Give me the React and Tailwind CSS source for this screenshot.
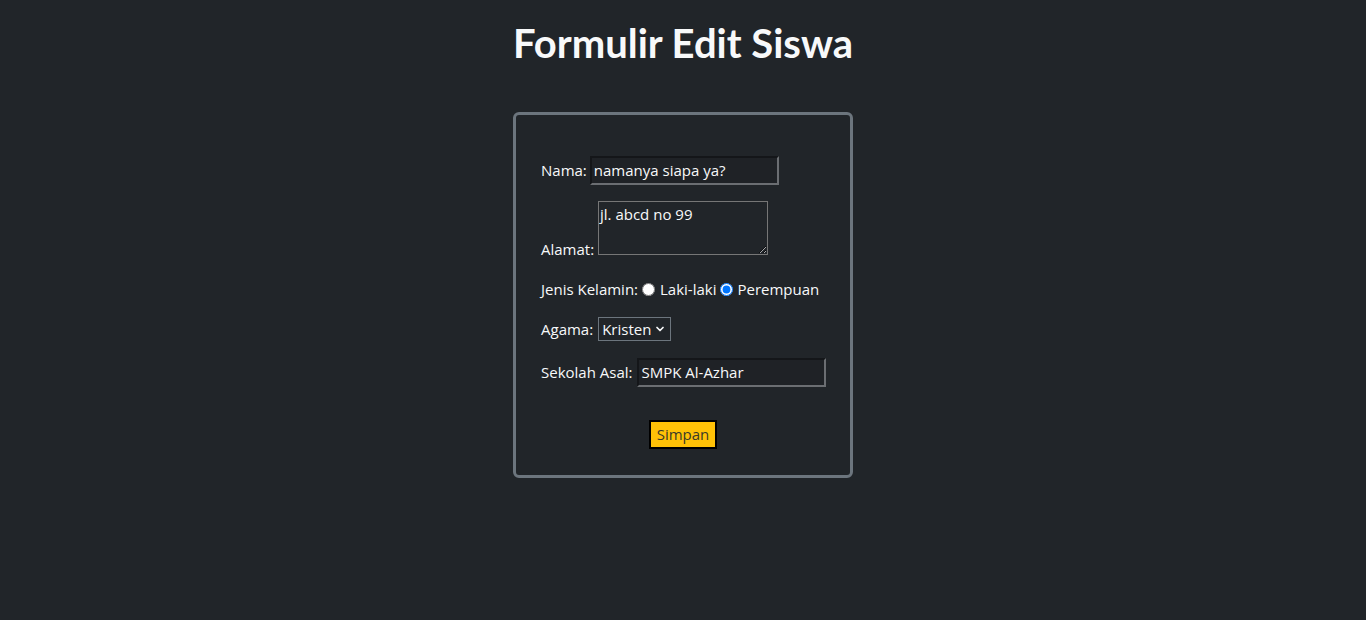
import React from 'react'
import { ChevronDown } from 'lucide-react'

const App = () => {
  return (
    <div className="min-h-screen bg-[#212529] text-[#f8f9fa] font-['Open_Sans','Noto_Sans',sans-serif] text-[15px]">
      <h1 className="pt-[19px] text-center font-['Lato','Open_Sans',sans-serif] text-[40px] font-bold leading-[48px]">
        Formulir Edit Siswa
      </h1>

      <form className="mx-auto mt-[45px] w-[340px] rounded-[6px] border-[3px] border-[#6c757d] pl-[25px] pr-[10px] pt-[40px] pb-[26px]">
        <div className="flex h-[30px] items-center gap-[3px] whitespace-nowrap">
          <label className="shrink-0">Nama:</label>
          <input
            type="text"
            defaultValue="namanya siapa ya?"
            className="h-[29px] w-[189px] shrink-0 border-2 border-t-[#141619] border-l-[#141619] border-b-[#6b6e72] border-r-[#6b6e72] bg-[#1f2226] px-[2px] text-[#f8f9fa] outline-none"
          />
        </div>

        <div className="mt-[16px] whitespace-nowrap leading-[24px]">
          <label>Alamat: </label>
          <textarea
            defaultValue="jl. abcd no 99"
            className="h-[54px] w-[170px] border border-[#767676] bg-transparent px-[1px] py-0 align-baseline text-[#f8f9fa] outline-none"
          />
        </div>

        <div className="mt-[16px] flex h-[24px] items-center whitespace-nowrap">
          <span>Jenis Kelamin:</span>
          <input type="radio" name="jk" className="ml-[4px] mr-[5px] h-[13px] w-[13px] shrink-0" />
          <span>Laki-laki</span>
          <input type="radio" name="jk" defaultChecked className="ml-[4px] mr-[4px] h-[13px] w-[13px] shrink-0 accent-[#0075ff]" />
          <span>Perempuan</span>
        </div>

        <div className="mt-[16px] flex h-[24px] items-center gap-[5px] whitespace-nowrap">
          <label>Agama:</label>
          <div className="relative">
            <select
              defaultValue="Kristen"
              className="h-[24px] w-[73px] appearance-none border border-[#6c757d] bg-[#212529] pl-[3px] text-[#f8f9fa] outline-none"
            >
              <option>Islam</option>
              <option>Kristen</option>
              <option>Katolik</option>
              <option>Hindu</option>
              <option>Buddha</option>
            </select>
            <ChevronDown className="pointer-events-none absolute right-[5px] top-[6px] h-[12px] w-[12px]" strokeWidth={3.5} />
          </div>
        </div>

        <div className="mt-[16px] flex h-[30px] items-center gap-[5px] whitespace-nowrap">
          <label className="shrink-0">Sekolah Asal:</label>
          <input
            type="text"
            defaultValue="SMPK Al-Azhar"
            className="h-[29px] w-[189px] shrink-0 border-2 border-t-[#141619] border-l-[#141619] border-b-[#6b6e72] border-r-[#6b6e72] bg-[#1f2226] px-[2px] text-[#f8f9fa] outline-none"
          />
        </div>

        <div className="mt-[33px] -ml-[15px] flex justify-center">
          <button
            type="button"
            className="h-[29px] border-2 border-black bg-[#ffc107] px-[6px] text-[#3a3a28]"
          >
            Simpan
          </button>
        </div>
      </form>
    </div>
  )
}

export default App
